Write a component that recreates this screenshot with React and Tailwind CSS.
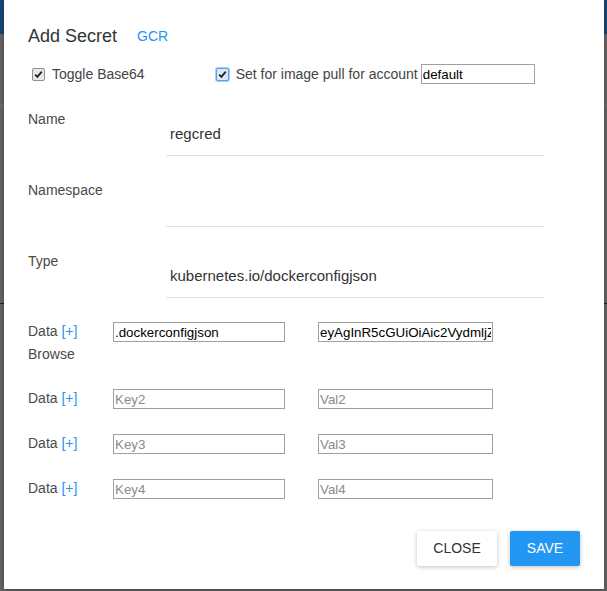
import React from "react";

function Check({ focused = false }) {
  return (
    <span
      className={
        "inline-flex w-[13px] h-[13px] items-center justify-center rounded-[2px] border " +
        (focused
          ? "border-[#5b9ee6] bg-[#dbeafb] shadow-[0_0_0_1px_#a9cdf3]"
          : "border-[#8f8f8f] bg-[#e8e8e8]")
      }
    >
      <svg width="9" height="9" viewBox="0 0 9 9">
        <path d="M1.2 4.6 L3.4 6.9 L7.8 1.6" fill="none" stroke="#222" strokeWidth="1.8" />
      </svg>
    </span>
  );
}

function Field({ label, value }) {
  return (
    <div className="flex h-[56px]">
      <div className="w-[138px] pt-[9px] leading-[20px] text-[14px] text-[#4a4a4a]">{label}</div>
      <div className="w-[378px] flex flex-col border-b border-[#e0e0e0]">
        <div className="mt-[24px] pl-[4px] leading-[20px] text-[15px] text-[#333]">{value}</div>
      </div>
    </div>
  );
}

function DataRow({ k, v, keyPh, valPh, browse }) {
  return (
    <div className="flex items-start pb-[21px]">
      <div className="w-[85px] text-[14px] text-[#4a4a4a]">
        <div className="leading-[24px]">
          Data <span className="text-[#2196f3]">[+]</span>
        </div>
        {browse && <div className="leading-[22px]">Browse</div>}
      </div>
      <input
        readOnly
        value={k}
        placeholder={keyPh}
        className="mt-[3px] w-[172px] h-[20px] border border-[#a0a0a0] px-[1px] text-[13.33px] text-black placeholder:text-[#8a8a8a] outline-none"
      />
      <input
        readOnly
        value={v}
        placeholder={valPh}
        className="mt-[3px] ml-[33px] w-[175px] h-[20px] border border-[#a0a0a0] px-[1px] text-[13.33px] text-black placeholder:text-[#8a8a8a] outline-none"
      />
    </div>
  );
}

export default function App() {
  return (
    <div className="relative w-[607px] h-[591px] overflow-hidden bg-[#676767] font-['Liberation_Sans',Arial,sans-serif]">
      {/* dimmed page behind */}
      <div className="h-[34px] bg-[#17497a]" />
      <div className="h-[71px]" />
      <div className="h-px bg-[#777]" />
      <div className="h-[197px]" />
      <div className="h-px bg-[#222]" />

      <div className="absolute left-[4px] top-0 w-[600px] h-[589px] bg-white shadow-[0_2px_6px_rgba(0,0,0,0.35)] px-[24px] pt-[24px] text-[#333]">
        <div className="flex items-center h-[24px]">
          <span className="text-[18px] text-[#333]">Add Secret</span>
          <span className="ml-[20px] text-[14px] text-[#2196f3]">GCR</span>
        </div>

        <div className="mt-[16px] flex items-center h-[20px] text-[14px] text-[#444]">
          <span className="ml-[4px]"><Check /></span>
          <span className="ml-[7px]">Toggle Base64</span>
          <span className="ml-[71px]"><Check focused /></span>
          <span className="ml-[7px]">Set for image pull for account</span>
          <input
            readOnly
            value="default"
            className="ml-[3px] w-[114px] h-[20px] border border-[#a0a0a0] px-[1px] text-[13.33px] text-black outline-none"
          />
        </div>

        <div className="mt-[16px] flex flex-col gap-[15px]">
          <Field label="Name" value="regcred" />
          <Field label="Namespace" value="" />
          <Field label="Type" value="kubernetes.io/dockerconfigjson" />
        </div>

        <div className="mt-[21px]">
          <DataRow k=".dockerconfigjson" v="eyAgInR5cGUiOiAic2VydmljZV9hY2NvdW50Iiw=" browse />
          <DataRow k="" v="" keyPh="Key2" valPh="Val2" />
          <DataRow k="" v="" keyPh="Key3" valPh="Val3" />
          <DataRow k="" v="" keyPh="Key4" valPh="Val4" />
        </div>

        <div className="mt-[10px] flex justify-end gap-[13px]">
          <button className="w-[80px] h-[35px] rounded-[2px] bg-white text-[14px] text-[#333] shadow-[0_1px_4px_rgba(0,0,0,0.25)]">
            CLOSE
          </button>
          <button className="w-[70px] h-[35px] rounded-[2px] bg-[#2196f3] text-[14px] text-white shadow-[0_1px_4px_rgba(0,0,0,0.25)]">
            SAVE
          </button>
        </div>
      </div>
    </div>
  );
}
